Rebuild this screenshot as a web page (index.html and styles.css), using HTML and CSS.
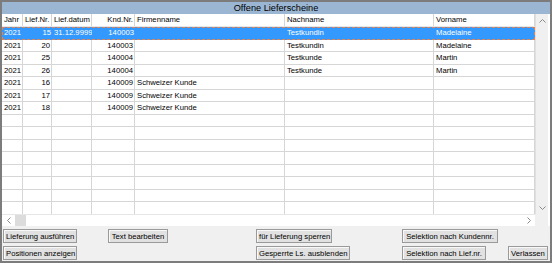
FILE: index.html
```html
<!DOCTYPE html>
<html lang="de">
<head>
  <meta charset="UTF-8" />
  <title>Offene Lieferscheine</title>
  <link rel="stylesheet" href="styles.css">
</head>
<body>
  <div class="window">
    <div class="title">Offene Lieferscheine</div>

    <div class="list">
      <div class="grid">
        <div class="row head">
          <div class="c c-jahr">Jahr</div>
          <div class="c c-nr">Lief.Nr.</div>
          <div class="c c-dat">Lief.datum</div>
          <div class="c c-knd">Knd.Nr.</div>
          <div class="c c-firma">Firmenname</div>
          <div class="c c-nach">Nachname</div>
          <div class="c c-vor">Vorname</div>
        </div>
        <div class="row sel">
          <div class="c c-jahr">2021</div>
          <div class="c c-nr">15</div>
          <div class="c c-dat">31.12.9999</div>
          <div class="c c-knd">140003</div>
          <div class="c c-firma"></div>
          <div class="c c-nach">Testkundin</div>
          <div class="c c-vor">Madelaine</div>
        </div>
        <div class="row">
          <div class="c c-jahr">2021</div>
          <div class="c c-nr">20</div>
          <div class="c c-dat"></div>
          <div class="c c-knd">140003</div>
          <div class="c c-firma"></div>
          <div class="c c-nach">Testkundin</div>
          <div class="c c-vor">Madelaine</div>
        </div>
        <div class="row">
          <div class="c c-jahr">2021</div>
          <div class="c c-nr">25</div>
          <div class="c c-dat"></div>
          <div class="c c-knd">140004</div>
          <div class="c c-firma"></div>
          <div class="c c-nach">Testkunde</div>
          <div class="c c-vor">Martin</div>
        </div>
        <div class="row">
          <div class="c c-jahr">2021</div>
          <div class="c c-nr">26</div>
          <div class="c c-dat"></div>
          <div class="c c-knd">140004</div>
          <div class="c c-firma"></div>
          <div class="c c-nach">Testkunde</div>
          <div class="c c-vor">Martin</div>
        </div>
        <div class="row">
          <div class="c c-jahr">2021</div>
          <div class="c c-nr">16</div>
          <div class="c c-dat"></div>
          <div class="c c-knd">140009</div>
          <div class="c c-firma">Schweizer Kunde</div>
          <div class="c c-nach"></div>
          <div class="c c-vor"></div>
        </div>
        <div class="row">
          <div class="c c-jahr">2021</div>
          <div class="c c-nr">17</div>
          <div class="c c-dat"></div>
          <div class="c c-knd">140009</div>
          <div class="c c-firma">Schweizer Kunde</div>
          <div class="c c-nach"></div>
          <div class="c c-vor"></div>
        </div>
        <div class="row">
          <div class="c c-jahr">2021</div>
          <div class="c c-nr">18</div>
          <div class="c c-dat"></div>
          <div class="c c-knd">140009</div>
          <div class="c c-firma">Schweizer Kunde</div>
          <div class="c c-nach"></div>
          <div class="c c-vor"></div>
        </div>
        <!-- empty rows -->
        <div class="row"><div class="c c-jahr"></div><div class="c c-nr"></div><div class="c c-dat"></div><div class="c c-knd"></div><div class="c c-firma"></div><div class="c c-nach"></div><div class="c c-vor"></div></div>
        <div class="row"><div class="c c-jahr"></div><div class="c c-nr"></div><div class="c c-dat"></div><div class="c c-knd"></div><div class="c c-firma"></div><div class="c c-nach"></div><div class="c c-vor"></div></div>
        <div class="row"><div class="c c-jahr"></div><div class="c c-nr"></div><div class="c c-dat"></div><div class="c c-knd"></div><div class="c c-firma"></div><div class="c c-nach"></div><div class="c c-vor"></div></div>
        <div class="row"><div class="c c-jahr"></div><div class="c c-nr"></div><div class="c c-dat"></div><div class="c c-knd"></div><div class="c c-firma"></div><div class="c c-nach"></div><div class="c c-vor"></div></div>
        <div class="row"><div class="c c-jahr"></div><div class="c c-nr"></div><div class="c c-dat"></div><div class="c c-knd"></div><div class="c c-firma"></div><div class="c c-nach"></div><div class="c c-vor"></div></div>
        <div class="row"><div class="c c-jahr"></div><div class="c c-nr"></div><div class="c c-dat"></div><div class="c c-knd"></div><div class="c c-firma"></div><div class="c c-nach"></div><div class="c c-vor"></div></div>
        <div class="row"><div class="c c-jahr"></div><div class="c c-nr"></div><div class="c c-dat"></div><div class="c c-knd"></div><div class="c c-firma"></div><div class="c c-nach"></div><div class="c c-vor"></div></div>
        <div class="row"><div class="c c-jahr"></div><div class="c c-nr"></div><div class="c c-dat"></div><div class="c c-knd"></div><div class="c c-firma"></div><div class="c c-nach"></div><div class="c c-vor"></div></div>
      </div>

      <div class="vscroll">
        <svg class="arrow" width="7" height="4" viewBox="0 0 7 4"><polyline points="0.5,3.5 3.5,0.5 6.5,3.5" /></svg>
        <svg class="arrow" width="7" height="4" viewBox="0 0 7 4"><polyline points="0.5,0.5 3.5,3.5 6.5,0.5" /></svg>
      </div>

      <div class="hscroll">
        <div class="hs-btn">
          <svg class="arrow" width="4" height="7" viewBox="0 0 4 7"><polyline points="3.5,0.5 0.5,3.5 3.5,6.5" /></svg>
        </div>
        <div class="hs-thumb"></div>
        <div class="hs-track"></div>
        <div class="hs-btn">
          <svg class="arrow" width="4" height="7" viewBox="0 0 4 7"><polyline points="0.5,0.5 3.5,3.5 0.5,6.5" /></svg>
        </div>
      </div>
      <div class="corner"></div>
    </div>

    <div class="buttons">
      <button class="btn w74">Lieferung ausführen</button>
      <button class="btn w60">Text bearbeiten</button>
      <button class="btn w76">für Lieferung sperren</button>
      <button class="btn w96">Selektion nach Kundennr.</button>
      <span></span>

      <button class="btn w74">Positionen anzeigen</button>
      <span></span>
      <button class="btn w94">Gesperrte Ls. ausblenden</button>
      <button class="btn w84">Selektion nach Lief.nr.</button>
      <button class="btn w40">Verlassen</button>
    </div>
  </div>
</body>
</html>
```

FILE: styles.css
```css
html, body {
  margin: 0;
  padding: 0;
  background: #f0f0f0;
}
body {
  font-family: "Liberation Sans", Arial, sans-serif;
  font-size: 7.7px;
  color: #000;
}
.window {
  box-sizing: border-box;
  width: 552px;
  height: 263px;
  border: 2px solid #7c7c7c;
  background: #f0f0f0;
  overflow: hidden;
}
.title {
  height: 12px;
  line-height: 12px;
  background: #9bb6d3;
  text-align: center;
  font-size: 9.2px;
  color: #000;
}

/* list area: grid + scrollbars */
.list {
  display: grid;
  grid-template-columns: 533px 13px;
  grid-template-rows: 200px 12px;
  background: #fff;
}
.grid {
  overflow: hidden;
  background: #fff;
}
.row {
  display: grid;
  grid-template-columns: 21px 29px 40px 43px 150px 149px 101px;
  height: 12.5px;
  line-height: 11.5px;
  box-sizing: border-box;
  border-bottom: 1px solid #d6d6d6;
}
.row.head {
  height: 13px;
  line-height: 12px;
  border-bottom: 1px solid #e6e6e6;
}
.c {
  box-sizing: border-box;
  border-right: 1px solid #d6d6d6;
  padding: 0 1px 0 2px;
  white-space: nowrap;
  overflow: hidden;
}
.c-nr, .c-knd {
  text-align: right;
}
.head .c-nr {
  text-align: left;
}
.row.sel {
  background: #3399ff;
  color: #fff;
  border-bottom: 1px dashed #e8804a;
  outline: 1px dashed #e8804a;
  outline-offset: -1px;
}
.row.sel .c {
  border-right: none;
}

.vscroll {
  display: flex;
  flex-direction: column;
  justify-content: space-between;
  align-items: center;
  padding: 5px 0 4px;
  box-sizing: border-box;
  background: #f0f0f0;
  border-left: 1px solid #e0e0e0;
}
.arrow {
  display: block;
  fill: none;
  stroke: #8a8a8a;
  stroke-width: 1;
}
.hscroll {
  display: flex;
  background: #fff;
  border-top: 1px solid #e6e6e6;
}
.hs-btn {
  width: 13px;
  display: flex;
  align-items: center;
  justify-content: center;
}
.hs-thumb {
  width: 11px;
  background: #dcdcdc;
}
.hs-track {
  flex: 1;
}
.corner {
  background: #f0f0f0;
}

/* buttons */
.buttons {
  display: grid;
  grid-template-columns: 105px 148px 146px 106px auto;
  grid-auto-rows: 14px;
  row-gap: 3px;
  padding: 3px 0 0 1px;
  align-items: start;
}
.btn {
  box-sizing: border-box;
  height: 14px;
  padding: 0 2px;
  margin: 0;
  font-family: inherit;
  font-size: 7.7px;
  color: #000;
  background: #e1e1e1;
  border: 1px solid #9a9a9a;
  border-radius: 0;
  box-shadow: inset 1px 1px 0 #f8f8f8;
  white-space: nowrap;
  text-align: center;
}
.w40 { width: 40px; }
.w60 { width: 60px; }
.w74 { width: 74px; }
.w76 { width: 76px; }
.w84 { width: 84px; }
.w94 { width: 94px; }
.w96 { width: 96px; }
```
